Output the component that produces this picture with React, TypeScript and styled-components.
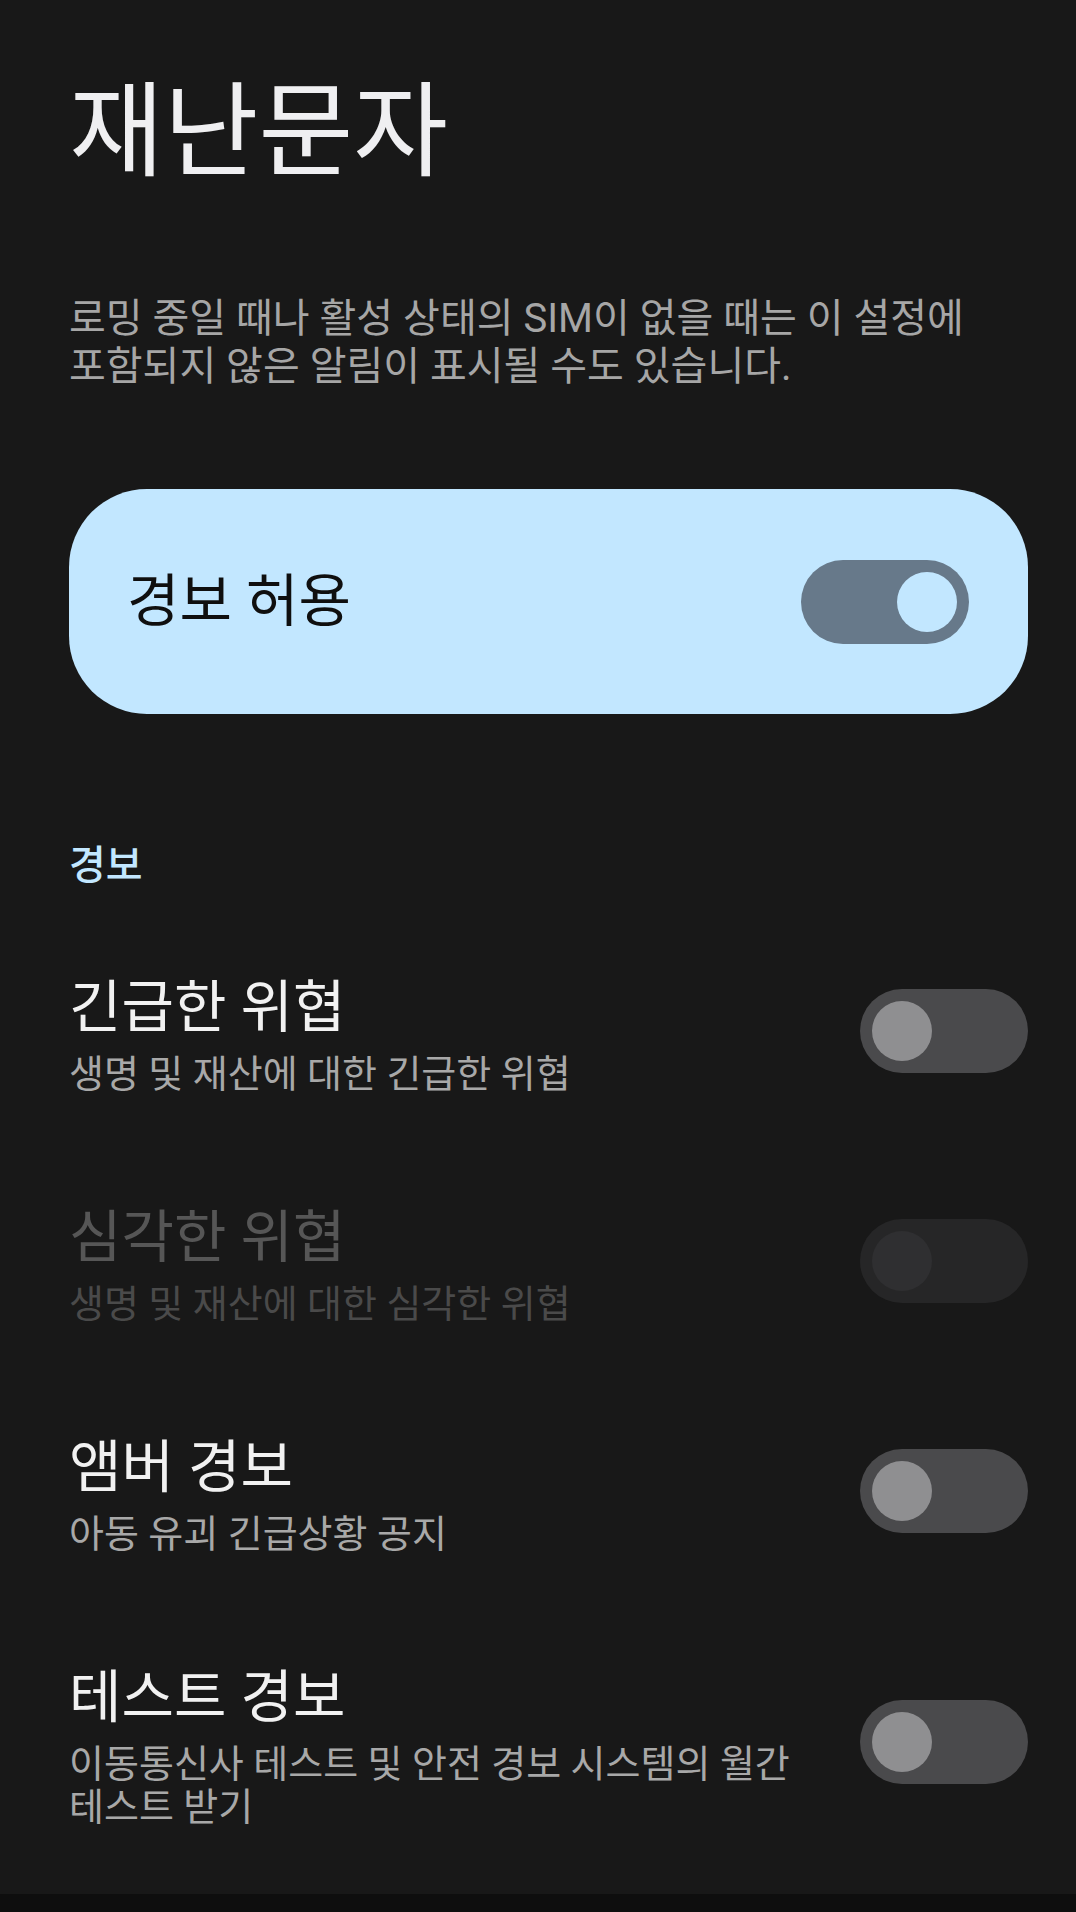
import React, { useState } from "react";
import styled, { createGlobalStyle, css } from "styled-components";

const GlobalStyle = createGlobalStyle`
  html, body {
    margin: 0;
    padding: 0;
    background: #181818;
  }
  body {
    font-family: "Roboto", "Noto Sans CJK KR", "Noto Sans", sans-serif;
    -webkit-font-smoothing: antialiased;
    word-break: keep-all;
  }
  * { box-sizing: border-box; }
`;

const Page = styled.div`
  display: flex;
  flex-direction: column;
  min-height: 1912px;
  background: #181818;
`;

const Content = styled.main`
  display: flex;
  flex-direction: column;
  padding: 0 48px 0 69px;
`;

const PageTitle = styled.h1`
  margin: 77px 0 0;
  font-size: 103px;
  line-height: 112px;
  font-weight: 400;
  color: #efeff1;
`;

const Intro = styled.p`
  margin: 106px 0 0;
  font-size: 40px;
  line-height: 48px;
  font-weight: 400;
  color: #a6a6a6;
`;

const MainCard = styled.div`
  margin-top: 98px;
  height: 225px;
  border-radius: 78px;
  background: #c2e7ff;
  display: flex;
  align-items: center;
  justify-content: space-between;
  padding: 0 59px 0 58px;
`;

const CardLabel = styled.span`
  font-size: 57px;
  line-height: 64px;
  color: #0f0f0f;
`;

const SectionHeader = styled.h2`
  margin: 128px 0 0;
  font-size: 40px;
  line-height: 48px;
  font-weight: 500;
  color: #c2e7ff;
`;

const List = styled.div`
  display: flex;
  flex-direction: column;
  margin-top: 28px;
`;

const Row = styled.div`
  display: flex;
  align-items: center;
  gap: 48px;
  padding: 58px 0 52px;
`;

const RowText = styled.div`
  flex: 1;
  min-width: 0;
`;

const RowTitle = styled.div<{ $disabled?: boolean }>`
  font-size: 57px;
  line-height: 64px;
  color: ${(p) => (p.$disabled ? "#565656" : "#f1f1f1")};
`;

const RowSummary = styled.div<{ $disabled?: boolean }>`
  margin-top: 13px;
  font-size: 38px;
  line-height: 43px;
  color: ${(p) => (p.$disabled ? "#4a4a4a" : "#a8a8a8")};
`;

type Tone = "card" | "list";

const Track = styled.button<{ $on: boolean; $tone: Tone; $disabled?: boolean }>`
  flex: none;
  width: 168px;
  height: 84px;
  border-radius: 42px;
  border: none;
  padding: 0 12px;
  display: flex;
  align-items: center;
  justify-content: ${(p) => (p.$on ? "flex-end" : "flex-start")};
  cursor: pointer;
  background: #4a4a4c;
  ${(p) =>
    p.$tone === "card" &&
    css`
      background: #67798a;
    `}
  ${(p) =>
    p.$disabled &&
    css`
      background: #262627;
      cursor: default;
    `}
  ${(p) =>
    p.$tone === "list" &&
    css`
      margin-bottom: 11px;
    `}
`;

const Thumb = styled.span<{ $tone: Tone; $disabled?: boolean }>`
  width: 60px;
  height: 60px;
  border-radius: 50%;
  background: ${(p) =>
    p.$disabled ? "#2f2f31" : p.$tone === "card" ? "#c2e7ff" : "#8f8f91"};
`;

const NavBar = styled.div`
  margin-top: auto;
  height: 18px;
  background: #0e0e0e;
`;

function Switch({
  on,
  tone,
  disabled,
  onToggle,
}: {
  on: boolean;
  tone: Tone;
  disabled?: boolean;
  onToggle?: () => void;
}) {
  return (
    <Track
      $on={on}
      $tone={tone}
      $disabled={disabled}
      role="switch"
      aria-checked={on}
      disabled={disabled}
      onClick={onToggle}
    >
      <Thumb $tone={tone} $disabled={disabled} />
    </Track>
  );
}

const items = [
  { key: "extreme", title: "긴급한 위협", summary: "생명 및 재산에 대한 긴급한 위협" },
  { key: "severe", title: "심각한 위협", summary: "생명 및 재산에 대한 심각한 위협", disabled: true },
  { key: "amber", title: "앰버 경보", summary: "아동 유괴 긴급상황 공지" },
  {
    key: "test",
    title: "테스트 경보",
    summary: "이동통신사 테스트 및 안전 경보 시스템의 월간 테스트 받기",
  },
];

export default function App() {
  const [allow, setAllow] = useState(true);
  const [state, setState] = useState<Record<string, boolean>>({});

  return (
    <>
      <GlobalStyle />
      <Page>
        <Content>
          <PageTitle>재난문자</PageTitle>
          <Intro>
            로밍 중일 때나 활성 상태의 SIM이 없을 때는 이 설정에 포함되지 않은 알림이 표시될 수도 있습니다.
          </Intro>
          <MainCard>
            <CardLabel>경보 허용</CardLabel>
            <Switch on={allow} tone="card" onToggle={() => setAllow(!allow)} />
          </MainCard>
          <SectionHeader>경보</SectionHeader>
          <List>
            {items.map((it) => (
              <Row key={it.key}>
                <RowText>
                  <RowTitle $disabled={it.disabled}>{it.title}</RowTitle>
                  <RowSummary $disabled={it.disabled}>{it.summary}</RowSummary>
                </RowText>
                <Switch
                  on={!!state[it.key]}
                  tone="list"
                  disabled={it.disabled}
                  onToggle={() => setState({ ...state, [it.key]: !state[it.key] })}
                />
              </Row>
            ))}
          </List>
        </Content>
        <NavBar />
      </Page>
    </>
  );
}
